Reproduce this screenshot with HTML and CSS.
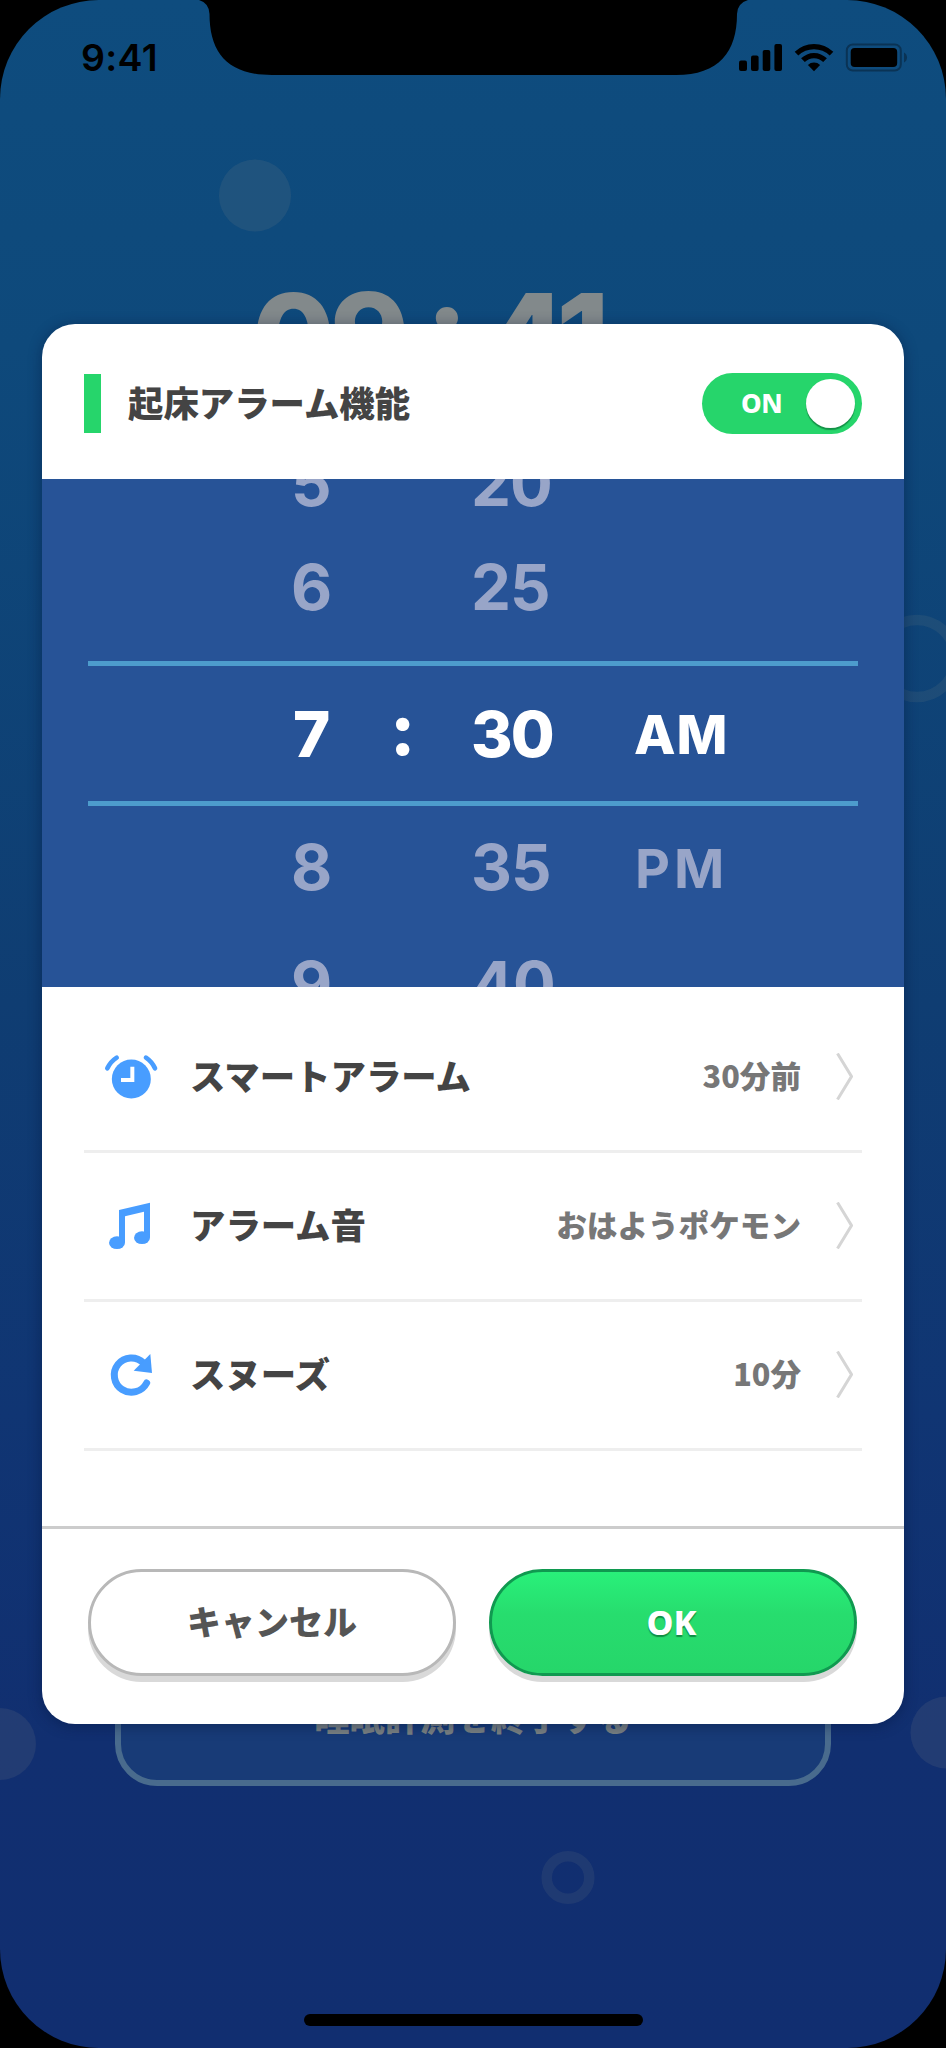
FILE: index.html
```html
<!DOCTYPE html>
<html lang="ja">
<head>
<meta charset="utf-8">
<title>起床アラーム機能</title>
<link rel="stylesheet" href="styles.css">
</head>
<body>
<div class="phone">
  <svg class="bubbles" viewBox="0 0 946 2048" aria-hidden="true">
    <circle cx="255" cy="195.5" r="36"/>
    <circle cx="0" cy="1744" r="36"/>
    <circle cx="946.5" cy="1732.5" r="36"/>
    <circle class="ring" cx="917" cy="658.5" r="38.5"/>
    <circle class="ring" cx="568" cy="1877.5" r="21.3"/>
  </svg>
  <div class="clock"><span>09</span><span class="clock-colon">:</span><span>41</span></div>
  <div class="stop-button">睡眠計測を終了する</div>

  <svg class="notch" viewBox="0 0 946 80" aria-hidden="true">
    <path d="M199 0Q209 3 209.500 14C209.500 52 227 75 272 75H676C719 75 737 52 737 14Q737.500 3 748 0Z"/>
  </svg>
  <div class="status">
    <span class="status-time">9:41</span>
    <svg class="status-icons" viewBox="0 0 170 30" aria-hidden="true">
      <rect x="1" y="18.500" width="8" height="10.500" rx="2"/>
      <rect x="13" y="13.500" width="7.600" height="15.500" rx="2"/>
      <rect x="24.700" y="8" width="7.600" height="21" rx="2"/>
      <rect x="36.400" y="2" width="7.600" height="27" rx="2"/>
      <path d="M56.700 9.800a27.500 27.500 0 0 1 38.600 0l-3.600 3.800a22.300 22.300 0 0 0-31.400 0z"/>
      <path d="M63.100 16.300a18.400 18.400 0 0 1 25.800 0l-3.700 3.800a13 13 0 0 0-18.400 0z"/>
      <path d="M69.900 22.900a8.900 8.900 0 0 1 12.200 0L76 29.200z"/>
      <rect class="cell-outline" x="108.800" y="2.500" width="54" height="26" rx="6"/>
      <rect x="112.700" y="6" width="46.500" height="19" rx="4"/>
      <path class="cell-nub" d="M166 10.500q3 1.600 3 5t-3 5z"/>
    </svg>
  </div>

  <main class="dialog">
    <header class="header">
      <span class="accent"></span>
      <h1 class="title">起床アラーム機能</h1>
      <div class="toggle"><span>ON</span><i class="knob"></i></div>
    </header>

    <section class="picker">
      <div class="wheel row-a"><span>5</span><span></span><span>20</span></div>
      <div class="wheel row-b"><span>6</span><span></span><span>25</span></div>
      <div class="wheel row-c"><div class="selected"><span class="seven">7</span><span class="colon">:</span><span class="minute">30</span><span class="ampm">AM</span></div></div>
      <div class="wheel row-d"><span>8</span><span></span><span>35</span><span class="ampm pm">PM</span></div>
      <div class="wheel row-e"><span>9</span><span></span><span>40</span></div>
    </section>

    <ul class="list">
      <li class="item">
        <svg class="icon" viewBox="225 219 159 144" aria-hidden="true">
          <circle cx="304" cy="297" r="58.500"/>
          <path class="hands" d="M307 260V300H273"/>
          <path class="bell" d="M232 265A78 78 0 0 1 260 233M348 233A78 78 0 0 1 375 265"/>
        </svg>
        <span class="label">スマートアラーム</span><span class="value">30分前</span>
        <svg class="chevron" viewBox="0 0 17 47" aria-hidden="true"><path d="M1.500.500 15.500 23.500 1.500 46.500"/></svg>
      </li>
      <li class="item">
        <svg class="icon" viewBox="225 666 159 144" aria-hidden="true">
          <path d="M267 690 360 668V773H342V695L285 709V788H267Z"/>
          <ellipse cx="261" cy="788" rx="24" ry="19"/>
          <ellipse cx="336" cy="773" rx="24" ry="19"/>
        </svg>
        <span class="label">アラーム音</span><span class="value">おはようポケモン</span>
        <svg class="chevron" viewBox="0 0 17 47" aria-hidden="true"><path d="M1.500.500 15.500 23.500 1.500 46.500"/></svg>
      </li>
      <li class="item">
        <svg class="icon" viewBox="225 1113 159 144" aria-hidden="true">
          <path class="turn" d="M350 1209A51.500 51.500 0 1 1 340 1148"/>
          <path d="M361 1122 366 1179 311 1172Z"/>
        </svg>
        <span class="label">スヌーズ</span><span class="value">10分</span>
        <svg class="chevron" viewBox="0 0 17 47" aria-hidden="true"><path d="M1.500.500 15.500 23.500 1.500 46.500"/></svg>
      </li>
    </ul>

    <footer class="footer">
      <button class="button cancel">キャンセル</button>
      <button class="button ok">OK</button>
    </footer>
  </main>
  <div class="home-bar"></div>
</div>
</body>
</html>
```

FILE: styles.css
```css
* { box-sizing: border-box; }
body { margin: 0; background: #000; }

.phone {
  position: relative;
  width: 946px;
  height: 2048px;
  overflow: hidden;
  border-radius: 99px;
  padding-top: 324px;
  background: linear-gradient(#0e4c7e 0%, #0e497b 17%, #0f3d72 49%, #103573 69%, #112f70 85%, #112e70 100%);
  font-family: "Noto Sans CJK JP", sans-serif;
  font-weight: 700;
}

/* Backdrop behind the dialog */
.bubbles { position: absolute; inset: 0; fill: #848984; fill-opacity: .15; }
.bubbles .ring { fill: none; stroke: #848984; stroke-opacity: .13; stroke-width: 10.500px; }
.clock {
  position: absolute;
  left: 252px;
  top: 265px;
  display: flex;
  color: #82898b;
  font: 800 120px/143px Inter, sans-serif;
  letter-spacing: -5px;
}
.clock-colon { width: 80px; text-align: center; transform: translateY(-10px); }
.stop-button {
  position: absolute;
  left: 115px;
  top: 1645px;
  width: 716px;
  height: 141px;
  border: 6px solid #496b8d;
  border-radius: 42px;
  background: #183b77;
  color: #7b8282;
  font-size: 35.300px;
  font-weight: 900;
  line-height: 129px;
  text-align: center;
}

.notch { position: absolute; left: 0; top: 0; width: 946px; height: 80px; }
.status {
  position: absolute;
  left: 81px;
  top: 36px;
  width: 827px;
  height: 43px;
  display: flex;
  justify-content: space-between;
}
.status-time { font: 600 37.500px/43px Inter, sans-serif; letter-spacing: .3px; }
.status-icons { width: 170px; height: 30px; margin-top: 6px; }
.cell-outline { fill: none; stroke: #0a3355; stroke-width: 2px; }
.cell-nub { fill: #0a3355; }

/* Dialog */
.dialog {
  position: relative;
  display: flex;
  flex-direction: column;
  width: 862px;
  height: 1400px;
  margin: 0 auto;
  border-radius: 33px;
  overflow: hidden;
  background: #fff;
  box-shadow: 0 2px 14px rgba(0, 20, 60, .45);
}
.header {
  display: flex;
  align-items: center;
  flex: none;
  height: 155px;
  padding: 3px 42px 0;
}
.accent { width: 17px; height: 59px; margin-right: 27px; background: #26d56b; }
.title { margin: -2px 0 0; color: #444; font-size: 35.400px; line-height: 50px; font-weight: 900; }
.toggle {
  position: relative;
  width: 160px;
  height: 61px;
  margin-left: auto;
  padding-left: 39px;
  border-radius: 31px;
  background: #26d56b;
  color: #fff;
  font: 800 26px/61px "Noto Sans", sans-serif;
  letter-spacing: -.5px;
}
.knob {
  position: absolute;
  right: 7px;
  top: 6px;
  width: 49px;
  height: 49px;
  border-radius: 50%;
  background: #fff;
  box-shadow: 0 2px 1px rgba(0, 80, 35, .5);
}

.picker { flex: none; height: 508px; overflow: hidden; background: #275397; }
.wheel, .selected {
  display: grid;
  grid-template-columns: 88px 92px 162px 1fr;
  align-items: center;
}
.wheel {
  padding-left: 249px;
  color: #98a5c8;
  font: 700 63.500px/76px Inter, sans-serif;
  letter-spacing: -1px;
}
.row-a { height: 104px; margin-top: -48px; }
.row-b { height: 104px; }
.row-c { display: block; height: 188px; padding: 22px 46px; }
.row-d { height: 80px; }
.row-e { height: 154px; }
.selected {
  height: 145px;
  padding-left: 203px;
  border: solid #4d9ccc;
  border-width: 5px 0;
  color: #fff;
  font-weight: 800;
}
.seven { padding-left: 2px; }
.minute { letter-spacing: -2px; }
.ampm { padding: 3px 0 0 1px; font-size: 54px; letter-spacing: 1px; }
.pm { padding-left: 2px; letter-spacing: 4px; }
.colon { padding-left: 11px; font-size: 72px; transform: translateY(-5px); }

.list { margin: 0; padding: 17px 42px 0; height: 539px; flex: none; list-style: none; }
.item {
  display: flex;
  align-items: center;
  height: 149px;
  padding-right: 9px;
  border-bottom: 3px solid #eee;
}
.icon { width: 53px; height: 48px; margin: 0 32px 0 21px; fill: #489dff; overflow: visible; }
.hands { fill: none; stroke: #fff; stroke-width: 12px; }
.bell { fill: none; stroke: #489dff; stroke-width: 14px; stroke-linecap: round; }
.turn { fill: none; stroke: #489dff; stroke-width: 21px; stroke-linecap: round; }
.label { margin-top: -5px; color: #444; font-size: 35.400px; font-weight: 900; line-height: 50px; }
.value { margin: -4px 1px 0 auto; color: #777; font-size: 30.600px; font-weight: 900; line-height: 46px; }
.chevron { width: 17px; height: 47px; margin: -1px 0 0 34px; }
.chevron path { fill: none; stroke: #d5d5d5; stroke-width: 3px; }

.footer {
  display: flex;
  gap: 33px;
  flex: 1;
  padding: 40px 46px 0;
  border-top: 3px solid #ccc;
}
.button {
  width: 368px;
  height: 107px;
  padding: 0 0 4px;
  border: 3px solid #b8b8b8;
  border-radius: 54px;
  background: #fff;
  box-shadow: 0 6px 0 #d9d9d9;
  color: #555;
  font: 900 34px/50px "Noto Sans CJK JP", sans-serif;
}
.ok {
  padding: 0 3px 2px 0;
  border-color: #109950;
  background: linear-gradient(#29f07a, #27dd6e 42%, #26d66a);
  color: #fff;
  font: 800 34px/50px "Noto Sans", sans-serif;
  text-shadow: 0 2px 1px rgba(0, 90, 40, .6);
}
.home-bar {
  position: absolute;
  left: 304px;
  top: 2014px;
  width: 339px;
  height: 12px;
  border-radius: 6px;
  background: #000;
}
```
